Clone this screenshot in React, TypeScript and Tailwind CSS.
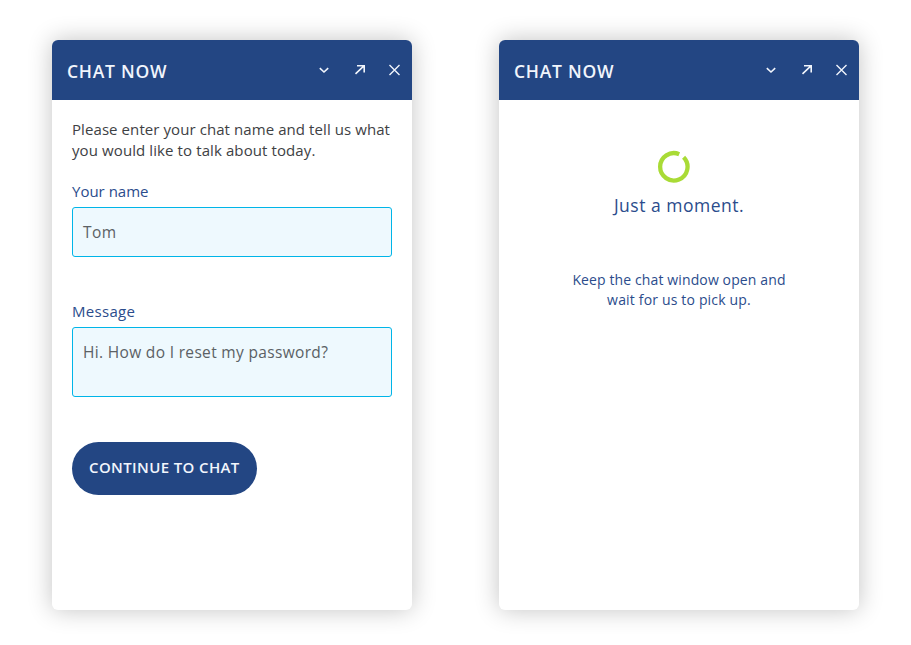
import type { ReactNode } from "react";

function ChatWindow({ children }: { children: ReactNode }) {
  return (
    <section className="flex h-[570px] w-[360px] flex-col overflow-hidden rounded-[6px] bg-white shadow-[0_0_25px_rgba(0,0,0,0.24)]">
      <header className="flex h-[60px] shrink-0 items-center justify-between bg-[#234683] pr-[11px] pl-[15px] text-[#f1f5fc]">
        <h1 className="text-[17.5px] leading-6 font-semibold tracking-[0.75px] whitespace-nowrap pt-px">CHAT NOW</h1>
        <div className="flex items-center">
          <button aria-label="Minimize" className="mr-6 block">
            <svg width="12" height="12" viewBox="0 0 12 12" fill="none" stroke="currentColor" strokeWidth="1.6"><path d="M1.8 4.2L6 8L10.2 4.2" /></svg>
          </button>
          <button aria-label="Pop out" className="mr-[22px] block">
            <svg width="12" height="12" viewBox="0 0 12 12" fill="none" stroke="currentColor" strokeWidth="1.6"><path d="M3 1.7H10.2V8.5M10.2 1.7L1.5 9.8" /></svg>
          </button>
          <button aria-label="Close" className="block">
            <svg width="13" height="12" viewBox="0 0 13 12" fill="none" stroke="currentColor" strokeWidth="1.4"><path d="M1.5 1L11.5 11M11.5 1L1.5 11" /></svg>
          </button>
        </div>
      </header>
      {children}
    </section>
  );
}

export default function App() {
  return (
    <main className="flex h-[645px] w-[911px] gap-[87px] overflow-hidden bg-white pt-10 pl-[52px] font-['Open_Sans',sans-serif]">
      <ChatWindow>
        <form className="flex flex-col items-start px-5 pt-[19px] text-[15px] leading-[21px] whitespace-nowrap text-[#3e4144]">
          <p>
            <span className="block tracking-[0.08px]">Please enter your chat name and tell us what</span>
            <span className="block tracking-[0.1px]">you would like to talk about today.</span>
          </p>
          <label className="mt-5 text-[#2b4c8c]">Your name</label>
          <div className="mt-[5px] h-[50px] w-[320px] rounded-[3px] border border-[#00b5e8] bg-[#eef9fe] px-[10px] pt-[14px] text-[#5b6165]">
            <span className="block text-[15.5px] leading-[21px] tracking-[0.4px]">Tom</span>
          </div>
          <label className="mt-11 tracking-[0.3px] text-[#2b4c8c]">Message</label>
          <div className="mt-[5px] h-[70px] w-[320px] rounded-[3px] border border-[#00b5e8] bg-[#eef9fe] px-[10px] pt-[14px] text-[#5b6165]">
            <span className="block text-[15.5px] leading-[21px] tracking-[0.33px]">Hi. How do I reset my password?</span>
          </div>
          <button type="button" className="mt-[45px] flex h-[53px] w-[185px] items-center rounded-[27px] bg-[#234683] pb-[2px] pl-[17px] font-semibold tracking-[0.38px] text-[#f1f5fc]">CONTINUE TO CHAT</button>
        </form>
      </ChatWindow>
      <ChatWindow>
        <div className="flex flex-col items-center pt-[50px] whitespace-nowrap text-[#2b4c8c]">
          <svg className="mr-[10px]" width="34" height="34" viewBox="0 0 34 34" fill="none" stroke="#a9db36" strokeWidth="4.3"><path d="M22.2 4.2A13.7 13.7 0 1 0 26.6 7.2" /></svg>
          <p className="mt-[9px] text-[17.5px] leading-6 tracking-[0.5px]">Just a moment.</p>
          <p className="mt-[53px] text-center text-[14px] leading-5">
            <span className="block tracking-[0.12px]">Keep the chat window open and</span>
            <span className="block tracking-[0.17px]">wait for us to pick up.</span>
          </p>
        </div>
      </ChatWindow>
    </main>
  );
}
